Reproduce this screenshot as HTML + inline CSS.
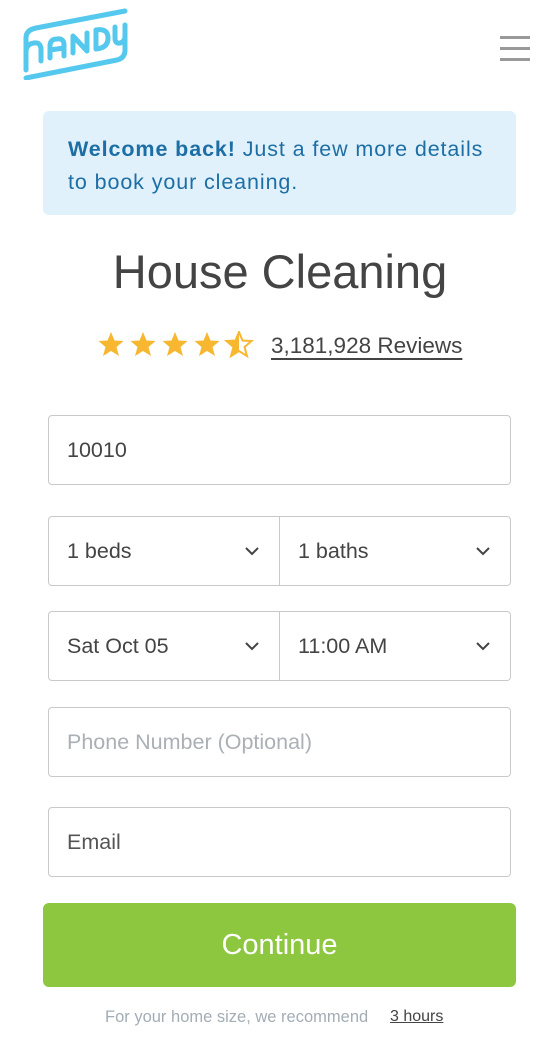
<!DOCTYPE html>
<html><head><meta charset="utf-8"><style>
*{margin:0;padding:0;box-sizing:border-box}
body{width:560px;height:1051px;background:#fff;font-family:"Liberation Sans",sans-serif;position:relative;overflow:hidden;color:#444}
.abs{position:absolute}
.banner{left:43px;top:111px;width:473px;height:104px;background:#e1f1fb;border-radius:6px;padding:22px 10px 22px 25px;color:#1c6ea4;font-size:21.5px;line-height:33px;letter-spacing:0.9px;white-space:nowrap}
.title{left:0;width:560px;top:244px;text-align:center;font-size:47px;color:#444}
.field{position:absolute;left:48px;width:463px;height:70px;border:1px solid #c9c9c9;border-radius:4px;font-size:21.5px;color:#444;display:flex;align-items:center;padding-left:18px}
.split{position:absolute;left:48px;width:463px;height:70px;border:1px solid #c9c9c9;border-radius:4px;display:flex}
.split div{flex:1;display:flex;align-items:center;padding-left:18px;font-size:21.5px;color:#444;position:relative}
.split div+div{border-left:1px solid #c9c9c9}
.chev{position:absolute;right:20px;top:30px}
.btn{left:43px;top:903px;width:473px;height:84px;background:#8dc63f;border-radius:6px;color:#fff;font-size:29px;text-align:center;line-height:84px}
</style></head><body>
<svg class="abs" style="left:22px;top:8px" width="108" height="72" viewBox="0 0 108 72">
<g fill="none" stroke="#55c8ee" stroke-width="5" stroke-linecap="round" stroke-linejoin="round">
<path d="M103 3 L14 20 Q4 22 4 30 L4 62"/>
<path d="M4 70 L95 52 Q103 50 103 42 L103 17"/>
<path d="M4 44 Q4 36 12 35 Q19 34 19 42 L19 53"/>
<path d="M28 50 L28 38 Q28 31 35 31 Q42 30 42 37 L42 48 M28 42 L42 40"/>
<path d="M51 45 L51 28 L65 43 L65 25"/>
<path d="M74 41 L74 22 Q86 20 86 30 Q86 40 74 41"/>
<path d="M93 19 L93 30 Q93 36 98 35 Q103 34 103 28"/>
</g></svg>
<div class="abs" style="left:500px;top:36px;width:30px;height:26px">
<div style="height:3px;background:#999;margin-bottom:8px"></div><div style="height:3px;background:#999;margin-bottom:8px"></div><div style="height:3px;background:#999"></div></div>
<div class="abs banner"><b>Welcome back!</b> Just a few more details<br>to book your cleaning.</div>
<div class="abs title">House Cleaning</div>
<svg class="abs" style="left:98px;top:331px" width="158" height="28" viewBox="0 0 158 28">
<defs><path id="s" d="M13 1 L16.5 9.5 L25.5 10 L18.5 16 L21 25 L13 20 L5 25 L7.5 16 L0.5 10 L9.5 9.5 Z"/></defs>
<g fill="#f7b731"><use href="#s" x="0"/><use href="#s" x="32"/><use href="#s" x="64"/><use href="#s" x="96"/></g>
<g transform="translate(128,0)"><use href="#s" fill="none" stroke="#f7b731" stroke-width="2"/><path d="M13 1 L13 20 L5 25 L7.5 16 L0.5 10 L9.5 9.5 Z" fill="#f7b731"/></g>
</svg>
<div class="abs" style="left:271px;top:333px;font-size:22.5px;color:#444;text-decoration:underline;text-underline-offset:5px">3,181,928 Reviews</div>
<div class="field" style="top:415px">10010</div>
<div class="split" style="top:516px"><div>1 beds<svg class="chev" width="14" height="9"><path d="M1 1 L7 7 L13 1" fill="none" stroke="#444" stroke-width="2"/></svg></div><div>1 baths<svg class="chev" width="14" height="9"><path d="M1 1 L7 7 L13 1" fill="none" stroke="#444" stroke-width="2"/></svg></div></div>
<div class="split" style="top:611px"><div>Sat Oct 05<svg class="chev" width="14" height="9"><path d="M1 1 L7 7 L13 1" fill="none" stroke="#444" stroke-width="2"/></svg></div><div>11:00 AM<svg class="chev" width="14" height="9"><path d="M1 1 L7 7 L13 1" fill="none" stroke="#444" stroke-width="2"/></svg></div></div>
<div class="field" style="top:707px;color:#aab0b5">Phone Number (Optional)</div>
<div class="field" style="top:807px;color:#555">Email</div>
<div class="abs btn">Continue</div>
<div class="abs" style="left:105px;top:1008px;font-size:16.5px;color:#a3adb5">For your home size, we recommend</div>
<div class="abs" style="left:390px;top:1008px;font-size:16px;color:#444;text-decoration:underline">3 hours</div>
</body></html>
